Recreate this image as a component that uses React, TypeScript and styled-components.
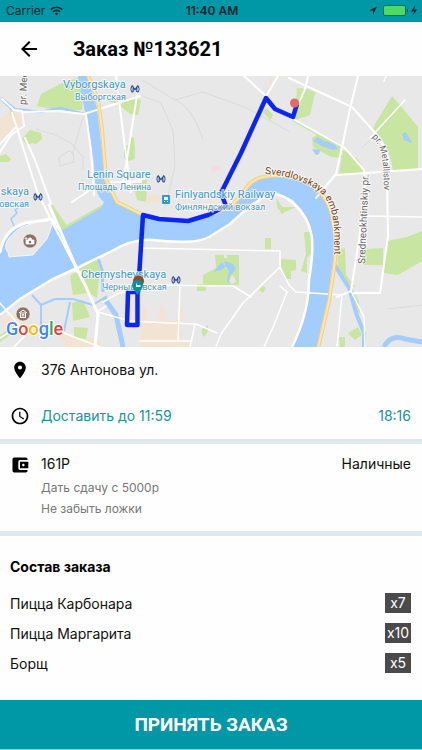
import React from 'react';
import styled, { createGlobalStyle } from 'styled-components';
import { MdAccessTime, MdAccountBalanceWallet, MdArrowBack, MdPlace } from 'react-icons/md';

const teal = '#0097a7';

const GlobalStyle = createGlobalStyle`
  * { box-sizing: border-box; }
  body {
    margin: 0;
    background: #fff;
    color: #111;
    font-family: Inter, "Liberation Sans", sans-serif;
  }
`;

const Screen = styled.div`
  display: flex;
  flex-direction: column;
  min-height: 100vh;
  background: #fefefe;
`;

const StatusBar = styled.div`
  display: grid;
  grid-template-columns: 1fr auto 1fr;
  align-items: center;
  height: 22px;
  padding: 0 4px 0 6px;
  background: ${teal};
  color: #05282c;
  font-size: 12px;
  line-height: 16px;
`;

const StatusGroup = styled.div<{ $end?: boolean }>`
  display: flex;
  align-items: center;
  justify-content: ${(p) => (p.$end ? 'flex-end' : 'flex-start')};
  gap: 5px;
`;

const Clock = styled.span`
  font-weight: 600;
`;

const Header = styled.header`
  display: flex;
  align-items: center;
  gap: 32px;
  height: 54px;
  padding: 0 17px;
`;

const BackButton = styled.button`
  display: flex;
  padding: 0;
  border: 0;
  background: none;
  color: #000;
`;

const Title = styled.h1`
  margin: 0;
  color: #000;
  font: 700 20px/28px Roboto, sans-serif;
`;

const MapSvg = styled.svg`
  display: block;
  width: 100%;
  height: auto;
  font-family: Roboto, sans-serif;
`;

const Section = styled.section<{ $divided?: boolean }>`
  border-bottom: ${(p) => (p.$divided ? '5px solid #e0e7ed' : '0')};
`;

const InfoRow = styled.div<{ $accent?: boolean }>`
  display: flex;
  align-items: center;
  gap: 11px;
  height: 46px;
  padding: 0 11px 0 10px;
  color: ${(p) => (p.$accent ? '#20939f' : '#111')};
  font-size: 14px;
  line-height: 20px;

  svg {
    flex: none;
    color: #000;
  }
`;

const Grow = styled.span`
  flex: 1;
`;

const Payment = styled(Section)`
  display: grid;
  grid-template-columns: 20px 1fr auto;
  column-gap: 11px;
  padding: 9px 11px 12px 10px;
  font-size: 14px;
  line-height: 22px;

  svg {
    margin-top: 2px;
    color: #000;
  }
`;

const Notes = styled.div`
  grid-column: 2 / -1;
  padding-top: 2px;
  color: #777;
  font-size: 12px;
  line-height: 21px;

  p { margin: 0; }
`;

const Order = styled(Section)`
  padding: 20px 11px 22px 10px;
`;

const OrderTitle = styled.h2`
  margin: 0 0 10px;
  color: #000;
  font-size: 14px;
  font-weight: 700;
  line-height: 22px;
`;

const Items = styled.ul`
  margin: 0;
  padding: 0;
  list-style: none;
`;

const Item = styled.li`
  display: flex;
  align-items: center;
  justify-content: space-between;
  height: 30px;
  font-size: 14px;
`;

const Quantity = styled.span`
  min-width: 26px;
  background: #4a4a4a;
  color: #fff;
  font-size: 14px;
  line-height: 20px;
  text-align: center;
`;

const AcceptButton = styled.button`
  height: 50px;
  margin-top: auto;
  padding: 0;
  border: 0;
  border-bottom: 1px solid #8fd3da;
  background: ${teal};
  color: #fff;
  font: 700 19px/24px Roboto, sans-serif;
`;

const Label = styled.text<{ $size: number; $color?: string }>`
  font-size: ${(p) => p.$size}px;
  fill: ${(p) => p.$color || '#3f97cc'};
  stroke: #fff;
  stroke-width: 2px;
  stroke-opacity: 0.75;
  stroke-linejoin: round;
  paint-order: stroke;
`;

const Metro = ({ x, y }: { x: number; y: number }) => (
  <g transform={`translate(${x} ${y})`} fill="none" stroke="#1d4689" strokeWidth="1.1">
    <path d="M-2.500-3.500C-4.500-1.500-4.500 1.500-2.500 3.500M2.500-3.500C4.500-1.500 4.500 1.500 2.500 3.500M-1.800 3V-2L0 .8 1.800-2V3" />
  </g>
);

const Museum = ({ x, y, camera }: { x: number; y: number; camera?: boolean }) => (
  <g transform={`translate(${x} ${y})`}>
    <circle r="7" fill="#8d7061" stroke="#fff" strokeOpacity=".5" />
    {camera ? (
      <>
        <path d="M-4-1h2l1-2h2l1 2h2v4h-8zM-4-4v3M-5.500-2.500h3" fill="#fff" stroke="#fff" strokeWidth=".7" />
        <circle cy="1" r="1.300" fill="#8d7061" />
      </>
    ) : (
      <path d="M-4-1L0-4 4-1M-3-1H3M-3 3.500H3M-2.500-1V3M2.500-1V3M-.8 2.500V.5H.8V2.500" fill="none" stroke="#fff" />
    )}
  </g>
);

function CityMap() {
  return (
    <MapSvg viewBox="0 76 422 271" role="img" aria-label="Маршрут доставки">
      <rect y="76" width="422" height="271" fill="#e8e8e8" />

      <g fill="#f3e3d2">
        <path d="M0 120L13 110 26 118 23 129 15 130 3 142H0zM147 195h14v8h-14zM269 78l5-2-6 20-3-1z" />
        <path d="M142 307h5v13h11l2-15 4 1 1 14h13v-14l4 2v32l-5 6h-37zM0 320l14-6 12 10-10 8zM140 346v-6h50v7h-50z" />
        <path d="M60 334l40 5v8H66z" />
      </g>

      <g fill="#c8e5a2">
        <path d="M37 106L41 94 62 83 84 76 82 110 57 110zM105 100L137 97 141 101 138 115 130 114 118 104zM124 148L129 144V138l5-1 1 13v9l-6 2-5-3zM133 183l14-4-1 23-9-2z" />
        <path d="M22 139l8-9 11 3 1 6-6 5-4-1-5 2zM0 156l6-2 5 5-2 3H0zM10 109l5 7-5-1zM49 205l3-1 16 23-6 5zM63 227l39-22v4L63 230z" />
        <path d="M70 276L97 256 100 270 97 298 88 293 73 295zM72 303l11-3 7 17-17 4zM74 327l14 1-2 11-12-2zM0 335l14-10-1 8-13 9z" />
        <path d="M263 112l4-4 6 7-3 5zM297 88l11 1 8 4-2 4-4 18-15 5zM312 138l6-4 22 10 2 14-11-1-18-10zM343 150l15 9 7 13-4 2-22 0z" />
        <path d="M375 124l17-28 12 14 14 17v43l-25 1c-2-13-5-24-13-34l-7-8zM294 119l48 28-2 1-48-27zM215 255h9v3h3v-3h12v30h-36v-10l13-7zM197 284h9v7h-9zM265 238h6v11h-6zM281 259l15 1v10l-5 1v8h-5l-5-12zM304 232h7v22l-4 4v15l-6-2 5-17z" />
        <path d="M337 250l8-2 1 27 10 13-6-4 9 18 1 12-4-3-6-21-12-17zM365 249l18-1v17h-20zM387 241l20-4 15-6v30l-24 14-15-2zM348 333l10-6 4 8-7 5zM339 337h6v10h-5zM202 329l6-4v6l-4 6-2-3zM259 290l4-4 3 2-3 5zM279 207l17 0-15 7zM276 198l8 11-6 1z" />
      </g>

      <g fill="#a3ccff">
        <path d="M78 76H88L97 108 103 160 109 190 121 205 143 215 188 222 217 214 232 207C246 196 248 178 275 175 310 174 333 196 333 225 338 250 329 275 328 304L318 347H292L305 315 311 270C315 241 314 220 293 200L276 192 253 203C243 215 229 225 208 237 192 246 162 240 145 240 125 241 104 254 77 268L51 280 24 297 0 317V250C2 238 14 226 25 223L51 219 61 231 101 208 104 202C96 196 95 185 94 165L90 137 84 107z" />
        <path d="M313 141l4-4 7 4 5 1 6 3 3 4-5 1-11-4-5-3zM312 149l8 1-1 4-3 1zM402 134l4-2 6 11-3-1-5-2zM226 266l-5 4-7 2 6-8 2-1zM224 261c7 2 12 3 11 9-2 4-5 4-6 8l1 5c-5-1-2-7-1-11-1-4-4-6-5-11zM0 100l9 4 8 7-6-1z" />
      </g>
      <path d="M8 252c-7-6 2-18 14-25 13-5 30-9 30-2l-5 14-14 16-24 2z" fill="#e8e8e8" stroke="#fff" strokeOpacity=".7" />
      <path d="M232 275l3 3 1 4-4 2-3-3z" fill="#e8e8e8" />
      <path d="M22 205l-7 5 2 3-6 6 3 7" fill="none" stroke="#a3ccff" strokeWidth="1.500" />

      <g fill="none" stroke="#a3ccff" strokeLinejoin="round">
        <path d="M1 98L15 109 40 112 60 108 85 114" strokeWidth="2.500" />
        <path d="M32 295l9 10 14-6 18 0 20 6 14-9M41 305v25M70 302l-6 29" strokeWidth="2" />
        <path d="M98 258l4 12 1 22" strokeWidth="3" />
        <path d="M104 298l12 17 7 32" strokeWidth="5" />
        <path d="M334 264l15 24 7 25 8 20v14" strokeWidth="4" />
        <path d="M384 347c4-8 11-12 21-8l17 3" strokeWidth="5" />
      </g>

      <g fill="none" stroke="#d9dcd9" strokeWidth="1">
        <path d="M36 129l19 6 16 8 12 14v13M72 155l11-38M59 157l10-6 4 2 1 9-14 4zM142 80l33 20 28-8 44 16 43 24M140 95l21 8 12 28 2 35-10 43M175 99c17 10 22 25 28 40M388 309l34-4M362 148l9-9" />
      </g>

      <g fill="none" stroke="#fff" strokeLinejoin="round" strokeLinecap="round">
        <path d="M2 99L14 110 22 111 24 126 11 135 0 152M22 112l36-1 26 3 56-18M86 115l5 35 3 45M0 144l15-16M12 113L37 191 51 220 77 270M244 76l22 20M278 76l-13 22M292 119l13-30 3-13M289 78l63 29 26 29c10 15 12 25 9 40l1 60-8 57h-26M293 119l52 29 19 22 1 15-6 55-8 51-14 6" strokeWidth="2" />
        <path d="M358 76l-8 33-8 38-6 27-20 24M336 175l86-6M116 76l8 64 7 52M138 89l-15 95 21-5M111 182h30" strokeWidth="2" />
        <path d="M25 138l10 22 16 44M72 202L93 188" strokeWidth="2" />
        <path d="M0 315L20 299 51 280 77 268 110 252C125 243 140 239 153 240 178 242 195 244 209 237L230 224 249 207 264 197C274 192 284 195 293 203 315 222 315 244 309 280 309 307 301 329 292 347" strokeWidth="2.500" />
        <path d="M0 252C3 236 13 227 25 223L52 219 61 232M49 205l28 64 9 18 12 27-3 33M74 270l8 3" strokeWidth="3" />
        <path d="M0 303l26 30 38 0 36 14M0 338l18-11M14 347l15-16M98 312l32 9 40 2 26 1 21 9M103 302l16-9 14-2M106 306l-9 6M140 248l140 3v16l-37 36-22 31-5 13M142 285l91 1 18 11M180 286l-2 55M195 324l-5 23M140 341h52M280 267l9 18 7 7 46 3-5 52M280 286l7 6-13 33-10 22M367 216l55 1M351 291l13 26 1 30M386 76l-2 5M405 100l-35 38" strokeWidth="1.500" />
      </g>

      <g fill="none" strokeLinejoin="round">
        <path d="M88 76L98 100 102 130 106 180 117 202 143 215M230 208l15-18c8-13 20-15 39-14 27 1 47 20 49 47 7 24 0 47-4 78l-11 47" stroke="#eed087" strokeWidth="4" />
        <path d="M88 76L98 100 102 130 106 180 117 202 143 215M230 208l15-18c8-13 20-15 39-14 27 1 47 20 49 47 7 24 0 47-4 78l-11 47" stroke="#ffe6a7" strokeWidth="2" />
        <path d="M138 292l2-30 3-47 16 4 29 2 20-6 18-9-5-13 20-40 25-55 9 11 18 8 4-13M138 292h-10l-1 33h10.500V292z" stroke="#0b25f5" strokeWidth="4.500" />
      </g>
      <path d="M211 167l9-2v5l-8 3z" fill="#f6dce0" />
      <circle cx="294.500" cy="103" r="4.500" fill="#e4696d" />

      <Label $size={11} x="63" y="88">Vyborgskaya</Label>
      <Label $size={9} x="75" y="100">Выборгская</Label>
      <Label $size={11} x="87" y="178">Lenin Square</Label>
      <Label $size={9} x="78" y="190">Площадь Ленина</Label>
      <Label $size={11} x="29" y="195" textAnchor="end">skaya</Label>
      <Label $size={9} x="29" y="207" textAnchor="end">овская</Label>
      <Label $size={11} x="175" y="198">Finlyandskiy Railway</Label>
      <Label $size={9} x="175" y="210">Финляндский вокзал</Label>
      <Label $size={11} x="81" y="278">Chernyshevskaya</Label>
      <Label $size={9} x="102" y="290">Чернышевская</Label>

      <defs>
        <path id="mes" d="M26 105L28 60" />
        <path id="embankment" d="M265 174C288 175 310 183 322 194 334 207 335 228 334 256" />
        <path id="metallistov" d="M372 137C382 147 384 157 384 200" />
        <path id="sredne" d="M365 264L369 166" />
      </defs>
      <Label $size={10} $color="#666"><textPath href="#mes">pr. Mec</textPath></Label>
      <Label $size={10} $color="#724017"><textPath href="#embankment">Sverdlovskaya embankment</textPath></Label>
      <Label $size={9} $color="#666"><textPath href="#metallistov">pr. Metallistov</textPath></Label>
      <Label $size={10} $color="#666"><textPath href="#sredne">Sredneokhtinskiy pr.</textPath></Label>

      <Metro x={135} y={89} />
      <Metro x={161} y={179} />
      <Metro x={38} y={197} />
      <Metro x={176} y={280} />
      <Museum x={30} y={241} camera />
      <Museum x={23} y={314} />

      <g transform="translate(162 195)">
        <rect width="8" height="9" rx="1" fill="#2b9ad6" />
        <path d="M2 2h4v3H2zM2 6h1v1H2zM5 6h1v1H5z" fill="#fff" />
      </g>

      <circle cx="138.500" cy="281" r="5.500" fill="#8e4b26" />
      <path d="M137.500 295l-4-6c-3-4-1-9 4-9s7 5 4 9z" fill="#0b8e9e" />
      <path d="M134.500 287h1.500v-4l1.500 2h3v2z" fill="#fff" />

      <g fontSize="18" fontWeight="500" stroke="#fff" strokeWidth="2" paintOrder="stroke" strokeLinejoin="round">
        <text x="6" y="335">
          <tspan fill="#4285f4">G</tspan><tspan fill="#ea4335">o</tspan><tspan fill="#fbbc05">o</tspan><tspan fill="#4285f4">g</tspan><tspan fill="#34a853">l</tspan><tspan fill="#ea4335">e</tspan>
        </text>
      </g>
    </MapSvg>
  );
}

const items = [
  { name: 'Пицца Карбонара', count: 7 },
  { name: 'Пицца Маргарита', count: 10 },
  { name: 'Борщ', count: 5 },
];

export default function App() {
  return (
    <Screen>
      <GlobalStyle />
      <StatusBar>
        <StatusGroup>
          <span>Carrier</span>
          <svg width="13" height="10" viewBox="0 0 13 10" fill="none" stroke="#05282c" strokeWidth="1.700">
            <path d="M.7 3.600a8.300 8.300 0 0 1 11.600 0M2.900 5.900a5.100 5.100 0 0 1 7.200 0" />
            <path d="M6.500 9.500l-1.700-2a2.500 2.500 0 0 1 3.400 0z" fill="#05282c" stroke="none" />
          </svg>
        </StatusGroup>
        <Clock>11:40 AM</Clock>
        <StatusGroup $end>
          <svg width="49" height="12" viewBox="0 0 49 12">
            <path d="M8 1.500L0 5.500h4v4.500z" fill="#05282c" />
            <rect x="14.500" y=".5" width="22" height="10" rx="1.500" fill="#4cd964" stroke="#126a5a" />
            <path d="M38 3.500q2 2 0 4z" fill="#05282c" />
            <path d="M46.500 0L42 6.500H45l-1.500 4.500L48 4.500H45z" fill="#05282c" />
          </svg>
        </StatusGroup>
      </StatusBar>

      <Header>
        <BackButton type="button" aria-label="Назад"><MdArrowBack size={24} /></BackButton>
        <Title>Заказ №133621</Title>
      </Header>

      <CityMap />

      <Section $divided>
        <InfoRow>
          <MdPlace size={20} />
          <span>376 Антонова ул.</span>
        </InfoRow>
        <InfoRow $accent>
          <MdAccessTime size={20} />
          <Grow>Доставить до 11:59</Grow>
          <time>18:16</time>
        </InfoRow>
      </Section>

      <Payment $divided>
        <MdAccountBalanceWallet size={20} />
        <span>161Р</span>
        <span>Наличные</span>
        <Notes>
          <p>Дать сдачу с 5000р</p>
          <p>Не забыть ложки</p>
        </Notes>
      </Payment>

      <Order>
        <OrderTitle>Состав заказа</OrderTitle>
        <Items>
          {items.map((item) => (
            <Item key={item.name}>
              <span>{item.name}</span>
              <Quantity>x{item.count}</Quantity>
            </Item>
          ))}
        </Items>
      </Order>

      <AcceptButton type="button">ПРИНЯТЬ ЗАКАЗ</AcceptButton>
    </Screen>
  );
}
